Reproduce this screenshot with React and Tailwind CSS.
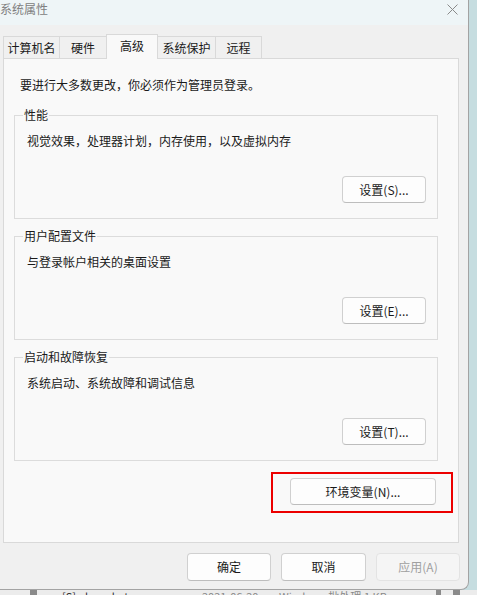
import React from 'react';

const font = "font-['Microsoft_YaHei_UI','Noto_Sans_CJK_SC',sans-serif]";

const tabs = [
    { label: '计算机名', w: 'w-[57px]' },
    { label: '硬件', w: 'w-[48px]' },
    { label: '高级', w: 'w-[52px]', active: true },
    { label: '系统保护', w: 'w-[59px]' },
    { label: '远程', w: 'w-[47px]' },
];

function WinButton({ children, className = '', disabled }) {
    return (
        <div
            className={
                'h-[27px] rounded-[4px] border flex items-center justify-center text-[12px] leading-none ' +
                (disabled
                    ? 'border-[#e3e3e3] bg-[#f5f5f5] text-[#a0a0a0] '
                    : 'border-[#d0d0d0] border-b-[#bdbdbd] bg-[#fdfdfd] text-[#1a1a1a] ') +
                className
            }
        >
            {children}
        </div>
    );
}

function Group({ title, desc, button, className = '' }) {
    return (
        <fieldset className={'ml-[10px] w-[424px] border border-[#dcdcdc] pb-[15px] ' + className}>
            <legend className="ml-[8px] px-[1px] leading-[16px] text-[12px] text-[#1a1a1a]">{title}</legend>
            <div className="mt-[10px] pl-[12px] leading-[16px] text-[12px] text-[#1a1a1a]">{desc}</div>
            <div className="mt-[27px] flex justify-end pr-[11px]">
                <WinButton className="w-[84px]">{button}</WinButton>
            </div>
        </fieldset>
    );
}

export default function App() {
    return (
        <div className={'w-[477px] h-[595px] overflow-hidden bg-[#c6dde0] ' + font}>
            <div className="flex">
                <div className="w-[469px] h-[590px] flex flex-col bg-[#f0f0f0] border-r border-b border-[#a3a3a3] rounded-br-[8px] overflow-hidden">
                    {/* title bar */}
                    <div className="h-[25px] shrink-0 bg-[#eef5f7] flex items-start justify-between">
                        <span className="pt-[1px] leading-[16px] text-[12px] text-[#808080]">系统属性</span>
                        <svg width="11" height="11" viewBox="0 0 11 11" className="mt-[4px] mr-[10px]">
                            <path d="M0.5 0.5 L10.5 10.5 M10.5 0.5 L0.5 10.5" stroke="#8a8a8a" strokeWidth="1" fill="none" />
                        </svg>
                    </div>

                    {/* tabs */}
                    <div className="mt-[9px] ml-[3px] flex items-end">
                        {tabs.map((t, i) => (
                            <div
                                key={t.label}
                                className={
                                    t.w +
                                    ' flex items-center justify-center border border-b-0 border-[#d9d9d9] text-[12px] leading-none text-[#1a1a1a] ' +
                                    (i > 0 ? '-ml-px ' : '') +
                                    (t.active
                                        ? 'relative z-10 h-[25px] -mb-px bg-[#f9f9f9] pb-[2px]'
                                        : 'h-[22px] bg-[#f0f0f0]')
                                }
                            >
                                {t.label}
                            </div>
                        ))}
                    </div>

                    {/* panel */}
                    <div className="ml-[3px] w-[456px] h-[485px] shrink-0 border border-[#d9d9d9] bg-[#f9f9f9] pt-[18px]">
                        <div className="pl-[16px] leading-[16px] text-[12px] text-[#1a1a1a]">
                            要进行大多数更改，你必须作为管理员登录。
                        </div>
                        <Group
                            className="mt-[14px]"
                            title="性能"
                            desc="视觉效果，处理器计划，内存使用，以及虚拟内存"
                            button="设置(S)..."
                        />
                        <Group
                            className="mt-[9px]"
                            title="用户配置文件"
                            desc="与登录帐户相关的桌面设置"
                            button="设置(E)..."
                        />
                        <Group
                            className="mt-[9px]"
                            title="启动和故障恢复"
                            desc="系统启动、系统故障和调试信息"
                            button="设置(T)..."
                        />
                        <div className="mt-[11px] flex justify-end pr-[5px]">
                            <div className="border-2 border-[#ec0000] pl-[17px] pr-[15px] pt-[4px] pb-[6px]">
                                <WinButton className="w-[146px]">环境变量(N)...</WinButton>
                            </div>
                        </div>
                    </div>

                    {/* bottom buttons */}
                    <div className="mt-[10px] flex justify-end gap-[10px] pr-[8px]">
                        <WinButton className="w-[84px] !h-[28px]">确定</WinButton>
                        <WinButton className="w-[85px] !h-[28px]">取消</WinButton>
                        <WinButton className="w-[84px] !h-[28px]" disabled>应用(A)</WinButton>
                    </div>
                </div>
            </div>

            {/* file list peeking out underneath */}
            <div className="h-[5px] overflow-hidden bg-[#ececec] flex items-start text-[11px] leading-[11px] text-[#555]">
                <div className="ml-[30px] w-[7px] h-[5px] bg-[#8a8a8a]" />
                <div className="ml-[25px] w-[140px] pt-[1px] text-[#333]">[S] ohom.bat</div>
                <div className="w-[77px] pt-[1px] text-[#888]">2021-06-20 19:50</div>
                <div className="w-[85px] pt-[1px] text-[#888]">Windows 批处理</div>
                <div className="w-[72px] pt-[1px] text-[#888]">1 KB</div>
                <div className="w-[5px] h-[5px] bg-[#8a8a8a]" />
                <div className="ml-[12px] w-[7px] h-[5px] bg-[#8a8a8a]" />
            </div>
        </div>
    );
}
